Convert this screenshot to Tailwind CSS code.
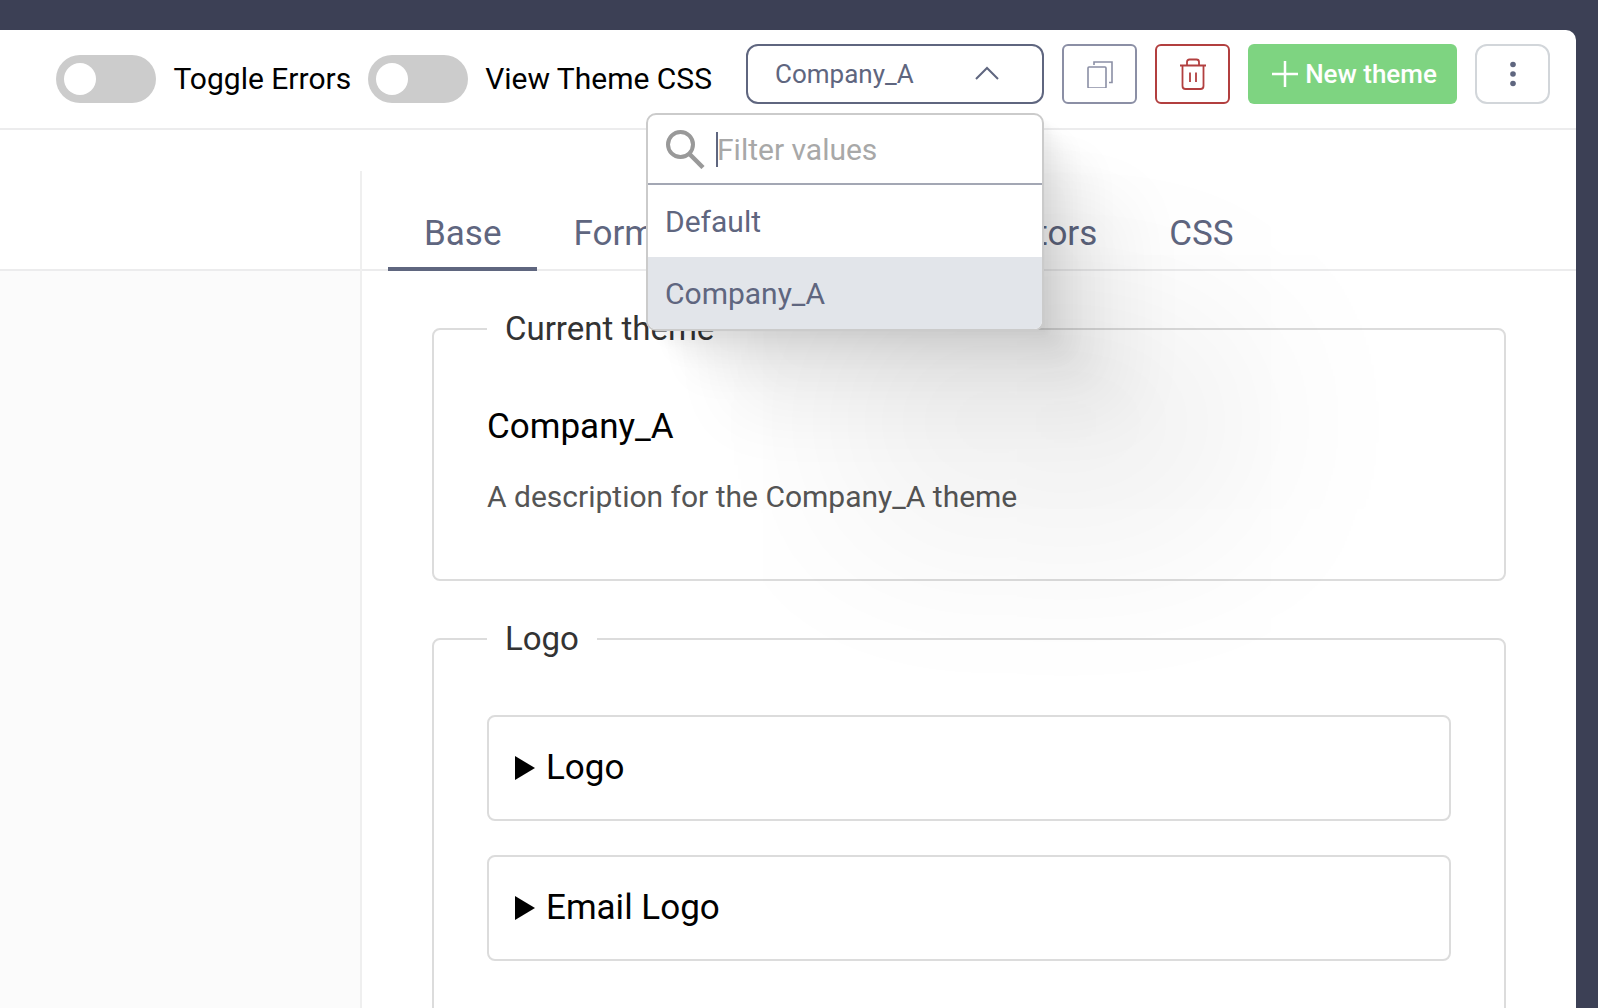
<!DOCTYPE html>
<html lang="en">
<head>
<meta charset="utf-8">
<title>Theme editor</title>
<script src="https://cdn.jsdelivr.net/npm/@tailwindcss/browser@4"></script>
</head>
<body class="flex h-screen flex-col overflow-hidden bg-[#3c4055] pt-[30px] pr-[22px] font-[Roboto,sans-serif] text-black">
  <div class="flex min-h-0 flex-1 flex-col rounded-tr-[10px] bg-white">

    <header class="flex h-[100px] shrink-0 items-center justify-end border-b-2 border-[#ececed] pr-[26px]">
      <div class="flex items-center gap-[17px] pr-[34px] text-[30px] leading-10 whitespace-nowrap">
        <input id="errors" type="checkbox" role="switch" class="h-12 w-[100px] shrink-0 appearance-none rounded-full bg-[#ccc] p-2 before:block before:size-8 before:rounded-full before:bg-white">
        <label for="errors">Toggle Errors</label>
        <input id="css" type="checkbox" role="switch" class="h-12 w-[100px] shrink-0 appearance-none rounded-full bg-[#ccc] p-2 before:block before:size-8 before:rounded-full before:bg-white">
        <label for="css">View Theme CSS</label>
      </div>

      <div class="mt-[14px] flex gap-[18px] self-start">
        <div class="relative">
          <select aria-label="Theme" class="block h-[60px] w-[298px] appearance-none rounded-xl border-2 border-[#5f667f] bg-white pl-[27px] text-[26px] text-[#5f667f]">
            <option>Default</option>
            <option selected>Company_A</option>
          </select>
          <svg class="pointer-events-none absolute top-[22px] right-[45px] h-[14px] w-6" viewBox="0 0 24 14" fill="none" stroke="#5f667f" stroke-width="2"><path d="M1 13 12 2l11 11"/></svg>

          <!-- Open theme menu -->
          <div class="absolute top-[69px] right-0 z-10 w-[398px] rounded-[10px] border-2 border-[#cbcbcb] bg-white text-[30px] text-[#5f667f] shadow-[6px_6px_4px_rgba(0,0,0,0.02),13px_13px_11px_rgba(0,0,0,0.028),25px_25px_20px_rgba(0,0,0,0.035),45px_45px_36px_rgba(0,0,0,0.042),84px_84px_67px_rgba(0,0,0,0.05),200px_200px_190px_rgba(0,0,0,0.07)]">
            <div class="flex h-[70px] items-center gap-[11px] border-b-2 border-[#a3a7b4] pl-[18px]">
              <svg class="size-10 shrink-0" viewBox="0 0 40 40" fill="none" stroke="#999" stroke-width="4"><circle cx="14.500" cy="15.500" r="12.500"/><path d="M23 24.500 37 38.500" stroke-width="4.500"/></svg>
              <span class="relative flex min-w-0 flex-1 items-center">
                <span class="absolute -left-px h-[35px] w-0.5 bg-[#5f667f]"></span>
                <input type="text" aria-label="Filter values" placeholder="Filter values" class="w-full outline-none placeholder:text-[#a8a8a8]">
              </span>
            </div>
            <ul role="listbox" aria-label="Themes">
              <li role="option" aria-selected="false" class="flex h-[72px] items-center pl-[17px]">Default</li>
              <li role="option" aria-selected="true" class="flex h-[72px] items-center rounded-b-lg bg-[#e2e5ea] pl-[17px]">Company_A</li>
            </ul>
          </div>
        </div>

        <button aria-label="Copy theme" class="flex h-[60px] w-[75px] items-center justify-center rounded-md border-2 border-[#8b8fa5]">
          <svg class="size-7" viewBox="0 0 28 28" fill="none" stroke="#8b8fa5" stroke-width="1.600"><rect x="2" y="7" width="18" height="21" rx="1"/><path d="M8 5V2h18v20.500h-3"/></svg>
        </button>
        <button aria-label="Delete theme" class="flex h-[60px] w-[75px] items-center justify-center rounded-md border-2 border-[#b23f3f]">
          <svg class="h-8 w-7" viewBox="0 0 28 32" fill="none" stroke="#b23f3f" stroke-width="1.800"><path d="M1 7.500h26M8 7V4q0-2.500 2.500-2.500h7Q20 1.500 20 4v3M3.500 7.500V28q0 3 3 3h15q3 0 3-3V7.500M11 14.500v9.500M17 14.500v9.500"/></svg>
        </button>
        <button class="flex h-[60px] w-[209px] items-center justify-center gap-[7px] rounded-md bg-[#7ed481] pl-1 text-[26px] font-medium whitespace-nowrap text-white">
          <svg class="size-[26px]" viewBox="0 0 26 26" fill="none" stroke="#fff" stroke-width="2.500"><path d="M13 0v26M0 13h26"/></svg>
          New theme
        </button>
        <button aria-label="More" class="flex h-[60px] w-[75px] items-center justify-center rounded-xl border-2 border-[#d2d6da]">
          <svg class="h-7 w-2" viewBox="0 0 8 28" fill="#5f667f"><circle cx="4" cy="4.500" r="2.800"/><circle cx="4" cy="14" r="2.800"/><circle cx="4" cy="23.500" r="2.800"/></svg>
        </button>
      </div>
    </header>

    <div class="flex min-h-0 flex-1 pt-[41px]">
      <aside class="flex w-[362px] shrink-0 flex-col border-r-2 border-[#efefef]">
        <div class="h-[100px] border-b-2 border-[#ececed]"></div>
        <div class="flex-1 bg-[#fbfbfb]"></div>
      </aside>

      <main class="min-w-0 flex-1 overflow-hidden">
        <nav class="flex h-[100px] border-b-2 border-[#ececed] pl-[26px] text-[35px] leading-10 text-[#5f667f]">
          <a href="#base" aria-current="page" class="-mb-0.5 border-b-4 border-[#5f667f] px-9 pt-[43px]">Base</a>
          <a href="#form" class="min-w-[415px] px-9 pt-[43px]">Form</a>
          <a href="#editors" class="px-9 pt-[43px]">Editors</a>
          <a href="#css" class="px-9 pt-[43px]">CSS</a>
        </nav>

        <div class="flex flex-col gap-[38px] px-[70px] pt-[38px]">
          <fieldset class="rounded-lg border-2 border-[#dcdcdc] px-[53px] pt-[58px] pb-[62px]">
            <legend class="px-[18px] text-[33px] leading-10 text-[#333]">Current theme</legend>
            <h2 class="text-[35px] leading-10">Company_A</h2>
            <p class="mt-[30px] text-[30px] leading-10 text-[#555]">A description for the Company_A theme</p>
          </fieldset>

          <fieldset class="rounded-lg border-2 border-[#dcdcdc] px-[53px] pt-14 pb-[62px]">
            <legend class="px-[18px] text-[33px] leading-10 text-[#333]">Logo</legend>
            <div class="flex flex-col gap-[34px] text-[35px] leading-10">
              <details class="rounded-lg border-2 border-[#dcdcdc]">
                <summary class="flex h-[102px] items-center gap-[11px] px-[26px]">
                  <svg class="h-6 w-5" viewBox="0 0 20 24"><path d="M0 0v24l20-12z"/></svg>Logo</summary>
              </details>
              <details class="rounded-lg border-2 border-[#dcdcdc]">
                <summary class="flex h-[102px] items-center gap-[11px] px-[26px]">
                  <svg class="h-6 w-5" viewBox="0 0 20 24"><path d="M0 0v24l20-12z"/></svg>Email Logo</summary>
              </details>
            </div>
          </fieldset>
        </div>
      </main>
    </div>
  </div>
</body>
</html>
